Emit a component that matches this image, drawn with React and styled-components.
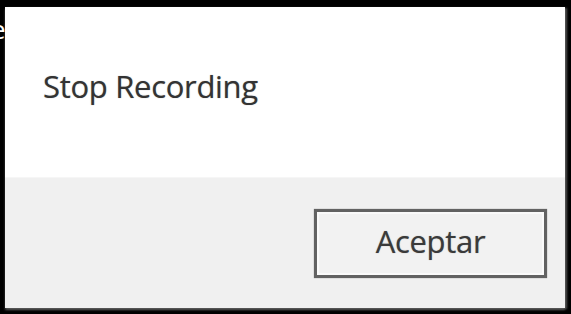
import React from 'react';
import styled, { createGlobalStyle } from 'styled-components';

const GlobalStyle = createGlobalStyle`
	html, body {
		margin: 0;
		padding: 0;
		background: #000;
	}
`;

const Screen = styled.div`
	width: 571px;
	height: 314px;
	background: #000;
	display: flex;
	padding: 7px 6px 6px 5px;
	box-sizing: border-box;
	position: relative;
	overflow: hidden;
`;

// cut-off letter from a window behind the dialog
const Stray = styled.span`
	position: absolute;
	left: -9px;
	top: 11px;
	font-family: 'Open Sans', sans-serif;
	font-size: 26px;
	color: #fff;
`;

const Dialog = styled.div`
	flex: 1;
	display: flex;
	flex-direction: column;
	background: #f0f0f0;
	box-shadow: 2px 1px 2px rgba(90, 90, 90, 0.9), 0 2px 2px rgba(90, 90, 90, 0.9);
`;

const Body = styled.div`
	height: 171px;
	background: #fff;
	box-sizing: border-box;
	padding: 58px 0 0 38px;
	border-bottom: 1px solid #f6f6f6;
`;

const Message = styled.p`
	margin: 0;
	font-family: 'Open Sans', sans-serif;
	font-size: 31px;
	font-weight: 500;
	letter-spacing: -0.3px;
	color: #333;
	text-shadow: 0 0 1px rgba(60, 60, 60, 0.5);
`;

const Footer = styled.div`
	flex: 1;
	display: flex;
	justify-content: flex-end;
	align-items: flex-start;
	padding: 31px 18px 0 0;
`;

const Button = styled.button`
	width: 233px;
	height: 69px;
	box-sizing: border-box;
	background: #f2f2f2;
	border: 3px solid #626262;
	box-shadow: inset 0 0 0 2px #fafafa, 0 0 1px #888;
	font-family: 'Open Sans', sans-serif;
	font-size: 31px;
	font-weight: 500;
	letter-spacing: -0.3px;
	color: #3a3a3a;
	text-shadow: 0 0 1px rgba(60, 60, 60, 0.5);
	padding: 0 0 6px;
`;

export default function App() {
	return (
		<>
			<GlobalStyle />
			<Screen>
				<Stray>e</Stray>
				<Dialog>
					<Body>
						<Message>Stop Recording</Message>
					</Body>
					<Footer>
						<Button>Aceptar</Button>
					</Footer>
				</Dialog>
			</Screen>
		</>
	);
}
